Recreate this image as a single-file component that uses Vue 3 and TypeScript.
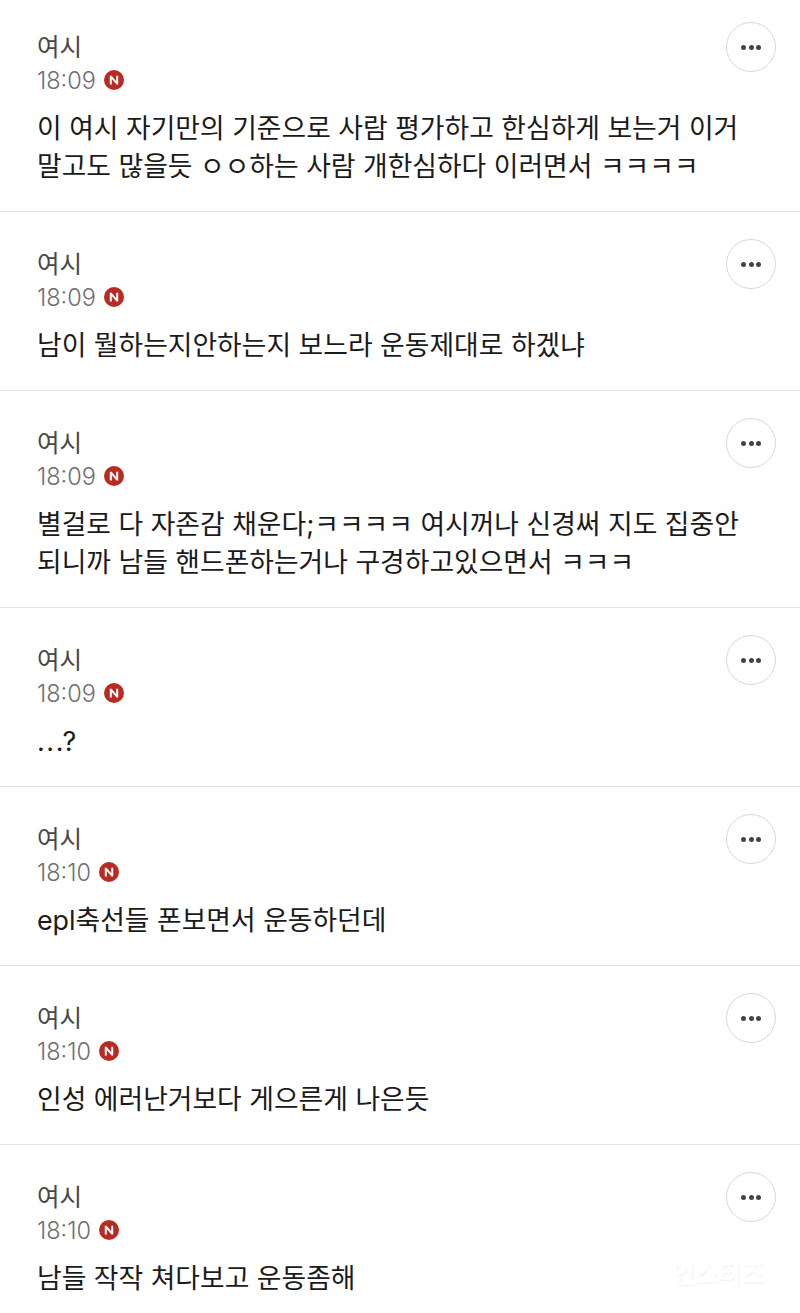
<template>
  <div class="list">
    <div v-for="(c, i) in comments" :key="i" class="comment">
      <div class="head">
        <div class="meta">
          <div class="name">{{ c.name }}</div>
          <div class="time-row">
            <span class="time">{{ c.time }}</span>
            <span class="new-badge">
              <svg width="20" height="20" viewBox="0 0 20 20">
                <circle cx="10" cy="10" r="10" fill="#b92b22" />
                <path d="M5.8 14.4V5.8h1.8l4.6 5.4V5.8h2v8.6h-1.7L7.8 9v5.4z" fill="#fff" />
              </svg>
            </span>
          </div>
        </div>
        <button class="more" type="button">
          <i></i><i></i><i></i>
        </button>
      </div>
      <p class="body" :class="{ spaced: c.spaced }">
        <template v-for="(line, li) in c.lines" :key="li">{{ line }}<br></template>
      </p>
    </div>
    <div class="watermark">인스티즈</div>
  </div>
</template>

<script setup lang="ts">
type Comment = { name: string; time: string; lines: string[]; spaced?: boolean };

const comments: Comment[] = [
  { name: "여시", time: "18:09", lines: ["이 여시 자기만의 기준으로 사람 평가하고 한심하게 보는거 이거", "말고도 많을듯 ㅇㅇ하는 사람 개한심하다 이러면서 ㅋㅋㅋㅋ"] },
  { name: "여시", time: "18:09", lines: ["남이 뭘하는지안하는지 보느라 운동제대로 하겠냐"] },
  { name: "여시", time: "18:09", lines: ["별걸로 다 자존감 채운다;ㅋㅋㅋㅋ 여시꺼나 신경써 지도 집중안", "되니까 남들 핸드폰하는거나 구경하고있으면서 ㅋㅋㅋ"] },
  { name: "여시", time: "18:09", lines: ["...?"], spaced: true },
  { name: "여시", time: "18:10", lines: ["epl축선들 폰보면서 운동하던데"] },
  { name: "여시", time: "18:10", lines: ["인성 에러난거보다 게으른게 나은듯"] },
  { name: "여시", time: "18:10", lines: ["남들 작작 쳐다보고 운동좀해"] },
];
</script>

<style>
html, body {
  margin: 0;
  background: #fff;
}
</style>

<style scoped>
.list {
  position: relative;
  height: 1313px;
  overflow: hidden;
  background: #fff;
  font-family: Inter, "Noto Sans CJK KR", sans-serif;
}

.comment {
  padding: 37px 24px 26px 37px;
  border-bottom: 1px solid #e2e2e2;
}

.comment:first-child {
  padding-top: 32px;
}

.comment:last-child {
  border-bottom: none;
}

.head {
  display: flex;
  justify-content: space-between;
  align-items: flex-start;
}

.name {
  font-size: 24.5px;
  line-height: 30px;
  margin-bottom: 2px;
  color: #484848;
}

.time-row {
  display: flex;
  align-items: center;
  gap: 8px;
  height: 32px;
}

.time {
  font-size: 23.5px;
  font-weight: 300;
  color: #6e6e73;
}

.new-badge {
  display: flex;
}

.more {
  display: flex;
  align-items: center;
  justify-content: center;
  gap: 2.5px;
  width: 50px;
  height: 50px;
  margin: -10px 0 0;
  padding: 0;
  background: #fff;
  border: 1.5px solid #d8d8d8;
  border-radius: 50%;
}

.more i {
  width: 5px;
  height: 5px;
  border-radius: 50%;
  background: #444;
}

.body {
  margin: 13px 0 0;
  font-size: 26.8px;
  line-height: 38px;
  color: #1a1a1a;
  white-space: nowrap;
}

.body.spaced {
  letter-spacing: 1.6px;
}

.watermark {
  position: absolute;
  right: 36px;
  bottom: 23px;
  font-size: 25px;
  font-weight: 700;
  color: #fff;
  text-shadow: 1px 1px 1px #f0f0f0;
}
</style>
